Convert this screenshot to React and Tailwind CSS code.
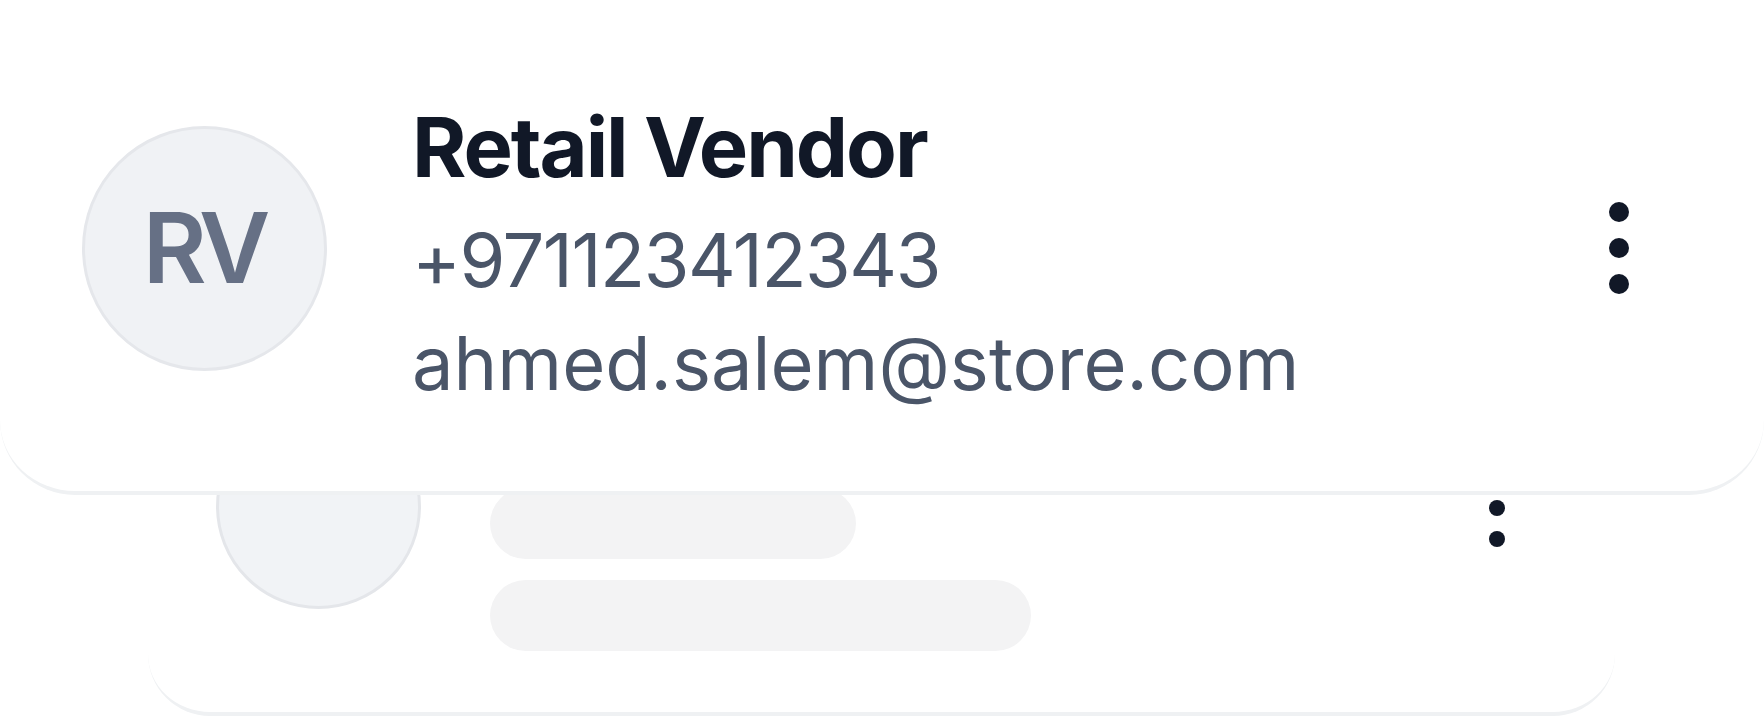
import React from "react";

const font = { fontFamily: "Inter, 'Noto Sans', sans-serif" };

const Dots = ({ size, gap }) => (
  <div className={`flex flex-col ${gap}`}>
    <span className={`${size} rounded-full bg-[#111827]`} />
    <span className={`${size} rounded-full bg-[#111827]`} />
    <span className={`${size} rounded-full bg-[#111827]`} />
  </div>
);

const SkeletonCard = () => (
  <div className="[grid-area:1/1] self-start mt-[300px] ml-[148px] w-[1467px] h-[416px] bg-white rounded-[62px] border-b-4 border-[#eff1f3] flex items-center pl-[68px] pr-[110px]">
    <div className="w-[205px] h-[205px] shrink-0 rounded-full bg-[#f1f3f6] border-[3px] border-[#e4e6ea]" />
    <div className="self-start pt-[188px] ml-[69px] flex flex-col gap-[21px]">
      <div className="w-[366px] h-[71px] rounded-full bg-[#f3f3f4]" />
      <div className="w-[541px] h-[71px] rounded-full bg-[#f3f3f4]" />
    </div>
    <div className="ml-auto mt-[4px]">
      <Dots size="w-[16px] h-[16px]" gap="gap-[15px]" />
    </div>
  </div>
);

const ContactCard = () => (
  <div className="[grid-area:1/1] self-start relative z-10 w-full h-[495px] bg-white rounded-[75px] border-b-4 border-[#eff1f3] flex items-center pt-[5px] pl-[82px] pr-[135px]">
    <div className="w-[245px] h-[245px] shrink-0 rounded-full bg-[#f0f2f5] border-[3px] border-[#e5e7eb] flex items-center justify-center">
      <span className="text-[98px] leading-none font-semibold tracking-[-0.06em] text-[#667085] pr-[2px]">RV</span>
    </div>
    <div className="ml-[85px] mt-[5px] flex flex-col">
      <div className="h-[123px] leading-[123px] text-[83px] font-bold tracking-[-0.025em] text-[#111827] whitespace-nowrap">
        Retail Vendor
      </div>
      <div className="h-[103px] leading-[103px] text-[74px] tracking-[-0.02em] text-[#4a5568] whitespace-nowrap">
        +971123412343
      </div>
      <div className="h-[103px] leading-[103px] text-[74px] tracking-normal text-[#4a5568] whitespace-nowrap">
        ahmed.salem@store.com
      </div>
    </div>
    <div className="ml-auto">
      <Dots size="w-[20px] h-[20px]" gap="gap-[16px]" />
    </div>
  </div>
);

export default function App() {
  return (
    <div style={font} className="w-[1764px] h-[720px] bg-white overflow-hidden grid">
      <SkeletonCard />
      <ContactCard />
    </div>
  );
}
